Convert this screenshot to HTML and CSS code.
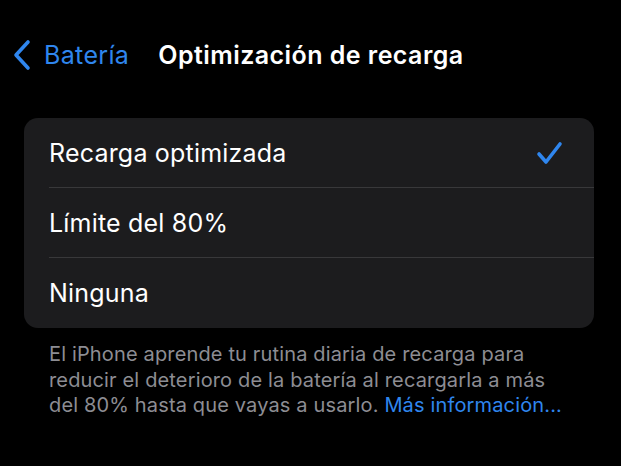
FILE: index.html
```html
<!DOCTYPE html>
<html lang="es">
<head>
<meta charset="utf-8">
<link rel="stylesheet" href="styles.css">
</head>
<body>
<div class="screen">
  <header class="nav">
    <a class="back">
      <svg class="chev" width="20" height="32" viewBox="0 0 20 32"><path d="M16 3 L4 16 L16 29" fill="none" stroke="#2f86ee" stroke-width="3.6" stroke-linecap="round" stroke-linejoin="round"/></svg>
      <span class="back-label">Batería</span>
    </a>
    <h1 class="title">Optimización de recarga</h1>
  </header>
  <ul class="card">
    <li class="row"><span class="label">Recarga optimizada</span>
      <svg class="check" width="28" height="26" viewBox="0 0 28 26"><path d="M3 14 L10 22 L24 4" fill="none" stroke="#2f86ee" stroke-width="3.6" stroke-linecap="round" stroke-linejoin="round"/></svg>
    </li>
    <li class="row"><span class="label">Límite del 80%</span></li>
    <li class="row"><span class="label">Ninguna</span></li>
  </ul>
  <p class="footer">El iPhone aprende tu rutina diaria de recarga para reducir el deterioro de la batería al recargarla a más del 80% hasta que vayas a usarlo. <span class="link">Más información...</span></p>
</div>
</body>
</html>
```
FILE: styles.css
```css
html, body { margin: 0; padding: 0; background: #000; }
body { font-family: Inter, "Noto Sans", sans-serif; color: #fff; -webkit-font-smoothing: antialiased; }
.screen { width: 621px; height: 466px; overflow: hidden; }
.nav { display: flex; align-items: center; padding: 23px 0 0 12px; box-sizing: border-box; height: 87px; }
.back { display: flex; align-items: center; gap: 12px; color: #2f86ee; }
.chev { display: block; }
.back-label { font-size: 25px; letter-spacing: 0.35px; }
.title { margin: 0 0 0 29px; font-size: 25px; font-weight: 600; letter-spacing: 0.45px; }
.card { list-style: none; margin: 31px 27px 0 24px; padding: 0; background: #1c1c1e; border-radius: 14px; }
.row { display: flex; align-items: center; justify-content: space-between; height: 70px; margin-left: 25px; padding-right: 30px; box-sizing: border-box; border-bottom: 1px solid #38383a; }
.row:last-child { border-bottom: none; }
.label { font-size: 25px; letter-spacing: 0.2px; }
.check { display: block; }
.footer { width: 520px; margin: 14px 0 0 49px; font-size: 20px; line-height: 25.5px; color: #8d8d93; letter-spacing: 0.15px; }
.link { color: #2f86ee; }
```
